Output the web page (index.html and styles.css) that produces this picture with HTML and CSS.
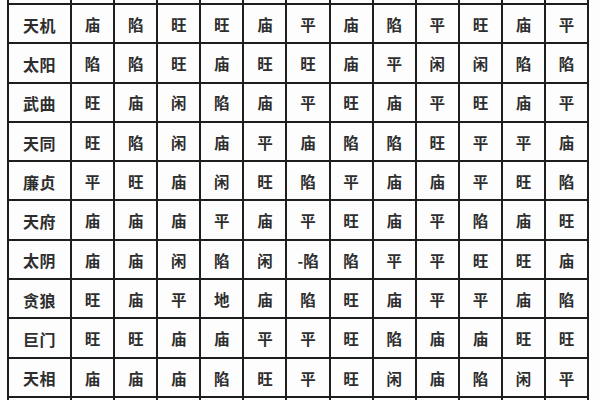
FILE: index.html
```html
<!DOCTYPE html>
<html lang="zh-CN">
<head>
<meta charset="utf-8">
<title>星曜庙旺表</title>
<link rel="stylesheet" href="styles.css">
</head>
<body>
<div class="grid">
  <div class="cell top"></div><div class="cell top"></div><div class="cell top"></div><div class="cell top"></div><div class="cell top"></div><div class="cell top"></div><div class="cell top"></div><div class="cell top"></div><div class="cell top"></div><div class="cell top"></div><div class="cell top"></div><div class="cell top"></div><div class="cell top"></div>

  <div class="cell name">天机</div><div class="cell">庙</div><div class="cell">陷</div><div class="cell">旺</div><div class="cell">旺</div><div class="cell">庙</div><div class="cell">平</div><div class="cell">庙</div><div class="cell">陷</div><div class="cell">平</div><div class="cell">旺</div><div class="cell">庙</div><div class="cell">平</div>

  <div class="cell name">太阳</div><div class="cell">陷</div><div class="cell">陷</div><div class="cell">旺</div><div class="cell">庙</div><div class="cell">旺</div><div class="cell">旺</div><div class="cell">庙</div><div class="cell">平</div><div class="cell">闲</div><div class="cell">闲</div><div class="cell">陷</div><div class="cell">陷</div>

  <div class="cell name">武曲</div><div class="cell">旺</div><div class="cell">庙</div><div class="cell">闲</div><div class="cell">陷</div><div class="cell">庙</div><div class="cell">平</div><div class="cell">旺</div><div class="cell">庙</div><div class="cell">平</div><div class="cell">旺</div><div class="cell">庙</div><div class="cell">平</div>

  <div class="cell name">天同</div><div class="cell">旺</div><div class="cell">陷</div><div class="cell">闲</div><div class="cell">庙</div><div class="cell">平</div><div class="cell">庙</div><div class="cell">陷</div><div class="cell">陷</div><div class="cell">旺</div><div class="cell">平</div><div class="cell">平</div><div class="cell">庙</div>

  <div class="cell name">廉贞</div><div class="cell">平</div><div class="cell">旺</div><div class="cell">庙</div><div class="cell">闲</div><div class="cell">旺</div><div class="cell">陷</div><div class="cell">平</div><div class="cell">庙</div><div class="cell">庙</div><div class="cell">平</div><div class="cell">旺</div><div class="cell">陷</div>

  <div class="cell name">天府</div><div class="cell">庙</div><div class="cell">庙</div><div class="cell">庙</div><div class="cell">平</div><div class="cell">庙</div><div class="cell">平</div><div class="cell">旺</div><div class="cell">庙</div><div class="cell">平</div><div class="cell">陷</div><div class="cell">庙</div><div class="cell">旺</div>

  <div class="cell name">太阴</div><div class="cell">庙</div><div class="cell">庙</div><div class="cell">闲</div><div class="cell">陷</div><div class="cell">闲</div><div class="cell">-陷</div><div class="cell">陷</div><div class="cell">平</div><div class="cell">平</div><div class="cell">旺</div><div class="cell">旺</div><div class="cell">庙</div>

  <div class="cell name">贪狼</div><div class="cell">旺</div><div class="cell">庙</div><div class="cell">平</div><div class="cell">地</div><div class="cell">庙</div><div class="cell">陷</div><div class="cell">旺</div><div class="cell">庙</div><div class="cell">平</div><div class="cell">平</div><div class="cell">庙</div><div class="cell">陷</div>

  <div class="cell name">巨门</div><div class="cell">旺</div><div class="cell">旺</div><div class="cell">庙</div><div class="cell">庙</div><div class="cell">平</div><div class="cell">平</div><div class="cell">旺</div><div class="cell">陷</div><div class="cell">庙</div><div class="cell">庙</div><div class="cell">旺</div><div class="cell">旺</div>

  <div class="cell name">天相</div><div class="cell">庙</div><div class="cell">庙</div><div class="cell">庙</div><div class="cell">陷</div><div class="cell">旺</div><div class="cell">平</div><div class="cell">旺</div><div class="cell">闲</div><div class="cell">庙</div><div class="cell">陷</div><div class="cell">闲</div><div class="cell">平</div>

  <div class="cell"></div><div class="cell"></div><div class="cell"></div><div class="cell"></div><div class="cell"></div><div class="cell"></div><div class="cell"></div><div class="cell"></div><div class="cell"></div><div class="cell"></div><div class="cell"></div><div class="cell"></div><div class="cell"></div>
</div>
</body>
</html>
```
FILE: styles.css
```css
html, body {
  margin: 0;
  padding: 0;
  background: #fdfdfd;
  overflow: hidden;
}
body {
  width: 600px;
  height: 400px;
  font-family: "Noto Sans CJK SC", "Noto Sans", sans-serif;
}
.grid {
  display: grid;
  grid-template-columns: 61px repeat(12, 41.1px);
  grid-template-rows: 3px repeat(10, 37.3px) 20px;
  gap: 2px;
  padding: 0 2px;
  margin-left: 7px;
  width: max-content;
  background: #1e1e1e;
}
.cell {
  background: #fdfdfd;
  display: flex;
  align-items: center;
  justify-content: center;
  color: #2e2e2e;
  font-size: 15.5px;
  font-weight: 700;
  line-height: 1;
  padding-top: 2px;
  box-sizing: border-box;
  overflow: hidden;
  white-space: nowrap;
}
.name {
  font-size: 16px;
  letter-spacing: 0.5px;
}
```
